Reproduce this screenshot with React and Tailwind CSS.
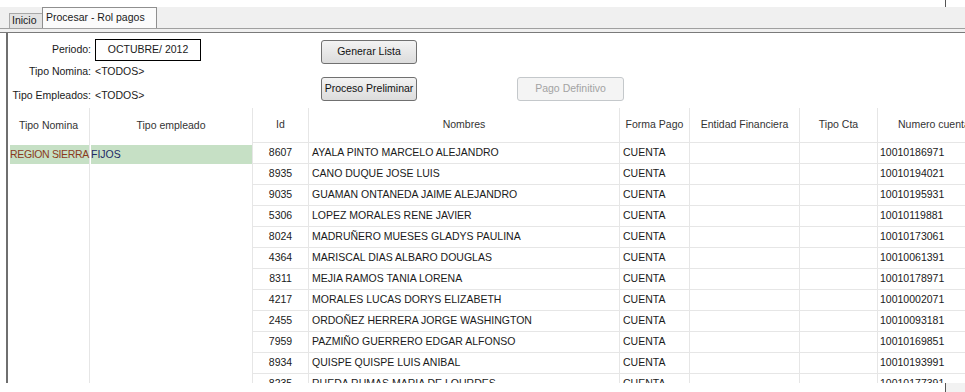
import React from 'react';

const rows = [
  ['8607', 'AYALA PINTO MARCELO ALEJANDRO', '10010186971'],
  ['8935', 'CANO DUQUE JOSE LUIS', '10010194021'],
  ['9035', 'GUAMAN ONTANEDA JAIME ALEJANDRO', '10010195931'],
  ['5306', 'LOPEZ MORALES RENE JAVIER', '10010119881'],
  ['8024', 'MADRUÑERO MUESES GLADYS PAULINA', '10010173061'],
  ['4364', 'MARISCAL DIAS ALBARO DOUGLAS', '10010061391'],
  ['8311', 'MEJIA RAMOS TANIA LORENA', '10010178971'],
  ['4217', 'MORALES LUCAS DORYS ELIZABETH', '10010002071'],
  ['2455', 'ORDOÑEZ HERRERA JORGE WASHINGTON', '10010093181'],
  ['7959', 'PAZMIÑO GUERRERO EDGAR ALFONSO', '10010169851'],
  ['8934', 'QUISPE QUISPE LUIS ANIBAL', '10010193991'],
  ['8235', 'RUEDA RUMAS MARIA DE LOURDES', '10010177391'],
];

const line = 'shrink-0 border-r border-[#e6e6e6]';
const cell = 'shrink-0 border-r border-b border-[#e6e6e6] flex items-center';

function Button({ children, disabled, className = '' }) {
  return (
    <button
      disabled={disabled}
      className={`h-[24px] rounded-[3px] border text-[10.5px] whitespace-nowrap ${
        disabled
          ? 'border-[#c4c8cb] bg-[#f4f4f4] text-[#a3a3a3]'
          : 'border-[#707070] bg-gradient-to-b from-[#f3f3f3] to-[#dcdcdc] text-[#111]'
      } ${className}`}
    >
      {children}
    </button>
  );
}

export default function App() {
  return (
    <div className="w-[965px] h-[392px] bg-white overflow-hidden flex flex-col font-['Liberation_Sans',Arial,sans-serif] text-[10.5px] text-[#1a1a1a]">
      {/* top strip */}
      <div className="h-[7px] flex justify-end pr-[19px]">
        <div className="w-px h-full bg-[#555]" />
      </div>

      {/* Tabs */}
      <div className="h-[22px] bg-[#f0f0f0] border-b border-[#a0a0a0] flex items-end pl-[9px]">
        <div className="h-[15px] w-[33px] bg-[#e3e3e3] border-t border-l border-[#a8a8a8] flex items-center pl-[2px] text-[10.5px]">
          Inicio
        </div>
        <div className="h-[21px] w-[115px] bg-[#fbfbfb] border-t border-l border-r border-[#8f8f8f] flex items-center pl-[3px] text-[10.5px]">
          Procesar - Rol pagos
        </div>
      </div>
      <div className="h-[4px] bg-[#f0f0f0] border-b border-[#7a7a7a]" />

      {/* Main panel */}
      <div className="h-[350px] ml-[6px] border-l-2 border-[#6f6f6f] overflow-hidden flex flex-col">
        {/* Form */}
        <div className="h-[75px] shrink-0 flex pt-[6px]">
          <div className="w-[313px] shrink-0">
            <div className="h-[22px] flex items-center">
              <span className="w-[83px] text-right">Periodo:</span>
              <div className="ml-[4px] w-[106px] h-[22px] border border-black flex items-center justify-center">
                OCTUBRE/ 2012
              </div>
            </div>
            <div className="h-[20px] mt-[1px] flex items-center">
              <span className="w-[83px] text-right">Tipo Nomina:</span>
              <span className="ml-[4px]">&lt;TODOS&gt;</span>
            </div>
            <div className="h-[20px] mt-[4px] flex items-center">
              <span className="w-[83px] text-right">Tipo Empleados:</span>
              <span className="ml-[4px]">&lt;TODOS&gt;</span>
            </div>
          </div>
          <div className="flex flex-col">
            <Button className="w-[96px] mt-[1px] h-[23px]">Generar Lista</Button>
            <div className="flex mt-[13px]">
              <Button className="w-[96px]">Proceso Preliminar</Button>
              <Button disabled className="w-[107px] ml-[100px]">
                Pago Definitivo
              </Button>
            </div>
          </div>
        </div>

        {/* Grid header */}
        <div className="h-[35px] shrink-0 flex text-[#333]">
          <div className={`w-[82px] ${line} flex items-center justify-center`}>Tipo Nomina</div>
          <div className={`w-[163px] ${line} flex items-center justify-center`}>Tipo empleado</div>
          <div className={`w-[56px] ${cell} justify-center`}>Id</div>
          <div className={`w-[311px] ${cell} justify-center`}>Nombres</div>
          <div className={`w-[70px] ${cell} justify-center`}>Forma Pago</div>
          <div className={`w-[110px] ${cell} justify-center`}>Entidad Financiera</div>
          <div className={`w-[78px] ${cell} justify-center`}>Tipo Cta</div>
          <div className={`w-[120px] ${cell} pl-[20px] whitespace-nowrap`}>Numero cuenta</div>
        </div>

        {/* Grid rows */}
        {rows.map(([id, name, cuenta], i) => (
          <div key={id} className="h-[21px] shrink-0 flex">
            <div className={`w-[82px] ${line} ${i === 0 ? 'pl-[2px] pt-[2px]' : ''}`}>
              {i === 0 && (
                <div className="h-full bg-[#c6e0c5] text-[#8a3a1c] flex items-center whitespace-nowrap tracking-[-0.35px]">
                  REGION SIERRA
                </div>
              )}
            </div>
            <div className={`w-[163px] ${line} ${i === 0 ? 'pl-[1px] pt-[2px]' : ''}`}>
              {i === 0 && (
                <div className="h-full bg-[#c6e0c5] text-[#1e2b66] flex items-center">FIJOS</div>
              )}
            </div>
            <div className={`w-[56px] ${cell} justify-center`}>{id}</div>
            <div className={`w-[311px] ${cell} pl-[3px] whitespace-nowrap`}>{name}</div>
            <div className={`w-[70px] ${cell} pl-[3px]`}>CUENTA</div>
            <div className={`w-[110px] ${cell}`} />
            <div className={`w-[78px] ${cell}`} />
            <div className={`w-[120px] ${cell} pl-[2px]`}>{cuenta}</div>
          </div>
        ))}
      </div>

      {/* bottom strip */}
      <div className="h-[9px] flex justify-end">
        <div className="w-[20px] h-full border-l border-[#555] bg-[#f2f2f2]" />
      </div>
    </div>
  );
}
